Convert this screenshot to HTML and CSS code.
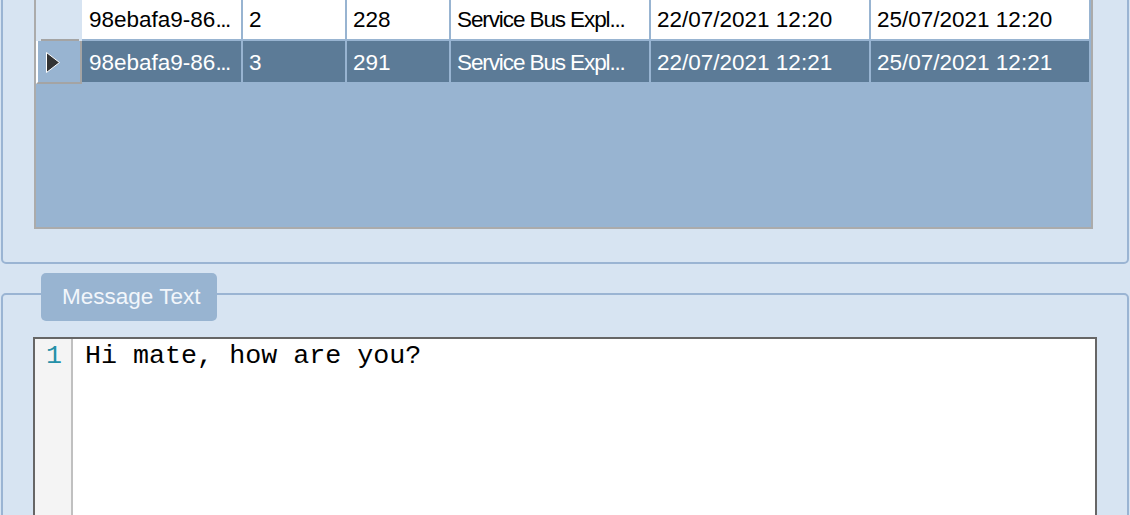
FILE: index.html
```html
<!DOCTYPE html>
<html lang="en">
<head>
<meta charset="utf-8">
<title>Messages</title>
<link rel="stylesheet" href="styles.css">
</head>
<body>
<div class="page">
  <section class="group upper">
    <div class="grid">
      <div class="row first">
        <div class="rh"></div>
        <div class="cell c1">98ebafa9-86<span class="dots">...</span></div>
        <div class="cell">2</div>
        <div class="cell">228</div>
        <div class="cell"><span class="narrow">Service Bus Expl</span><span class="dots">...</span></div>
        <div class="cell">22/07/2021 12:20</div>
        <div class="cell">25/07/2021 12:20</div>
      </div>
      <div class="row sel">
        <div class="rh">
          <svg class="arrow" width="16" height="23" viewBox="0 0 16 23"><polygon points="1.5,1.5 14.5,11.5 1.5,21.5" fill="#333333" stroke="#ffffff" stroke-width="1"/></svg>
        </div>
        <div class="cell c1">98ebafa9-86<span class="dots">...</span></div>
        <div class="cell">3</div>
        <div class="cell">291</div>
        <div class="cell"><span class="narrow">Service Bus Expl</span><span class="dots">...</span></div>
        <div class="cell">22/07/2021 12:21</div>
        <div class="cell">25/07/2021 12:21</div>
      </div>
    </div>
  </section>
  <section class="group lower">
    <div class="tab">Message Text</div>
    <div class="editor">
      <div class="gutter"><span>1</span></div>
      <div class="code">Hi mate, how are you?</div>
    </div>
  </section>
</div>
</body>
</html>
```

FILE: styles.css
```css
* { box-sizing: border-box; }
html, body { margin: 0; padding: 0; }
body {
  width: 1130px;
  height: 515px;
  overflow: hidden;
  background: #d7e4f2;
  font-family: "Liberation Sans", Arial, sans-serif;
}
.page { padding: 0 1px; }
.group {
  border: 2px solid #9ab4d3;
  border-radius: 5px;
}
.upper {
  margin-top: -6px;
  padding: 0 34px 33px 31px;
}
.grid {
  height: 233px;
  border: 2px solid #ababab;
  background: #98b4d1;
  display: flex;
  flex-direction: column;
  gap: 2px;
}
.row {
  display: grid;
  grid-template-columns: 44px 159px 102px 102px 198px 218px 218px;
  column-gap: 2px;
  height: 41px;
}
.rh {
  margin-right: -2px;
  background: #d7e4f2;
  position: relative;
}
.first .rh { margin-bottom: -2px; }
.first .rh::after {
  content: "";
  position: absolute;
  left: 5px;
  right: 3px;
  bottom: 0;
  height: 2px;
  background: #a4a4a4;
}
.sel .rh {
  background: #98b4d1;
  border-left: 2px solid #ffffff;
  border-right: 2px solid #a4a4a4;
  border-bottom: 2px solid #a4a4a4;
  margin-bottom: -2px;
  padding: 10px 0 0 7px;
}
.arrow { display: block; }
.cell {
  background: #ffffff;
  color: #000000;
  font-size: 22.5px;
  line-height: 39px;
  padding: 2px 0 0 6px;
  white-space: nowrap;
  overflow: hidden;
}
.cell.c1 { padding-left: 7px; }
.sel .cell {
  background: #5c7b97;
  color: #ffffff;
}
.narrow { letter-spacing: -1.1px; }
.dots { letter-spacing: -1.2px; }
.c1 .dots { letter-spacing: -1.5px; }
.lower {
  margin-top: 29px;
  height: 260px;
  padding: 0 30px;
}
.tab {
  margin: -22px 0 0 8px;
  width: 176px;
  height: 48px;
  background: #98b4d1;
  border-radius: 5px;
  color: #f2f6fb;
  font-size: 22.5px;
  line-height: 48px;
  padding-left: 21px;
  white-space: nowrap;
}
.editor {
  margin-top: 16px;
  height: 230px;
  border: 2px solid #666666;
  background: #ffffff;
  display: flex;
  font-family: "Liberation Mono", "Courier New", monospace;
  font-size: 26.7px;
  line-height: 30px;
}
.gutter {
  width: 38px;
  flex: none;
  background: #f4f4f4;
  border-right: 2px solid #c0c0c0;
  color: #2591a9;
  text-align: center;
  padding: 2px 0 0 2px;
}
.code {
  flex: 1;
  color: #000000;
  padding: 2px 0 0 12px;
  white-space: pre;
}
```
